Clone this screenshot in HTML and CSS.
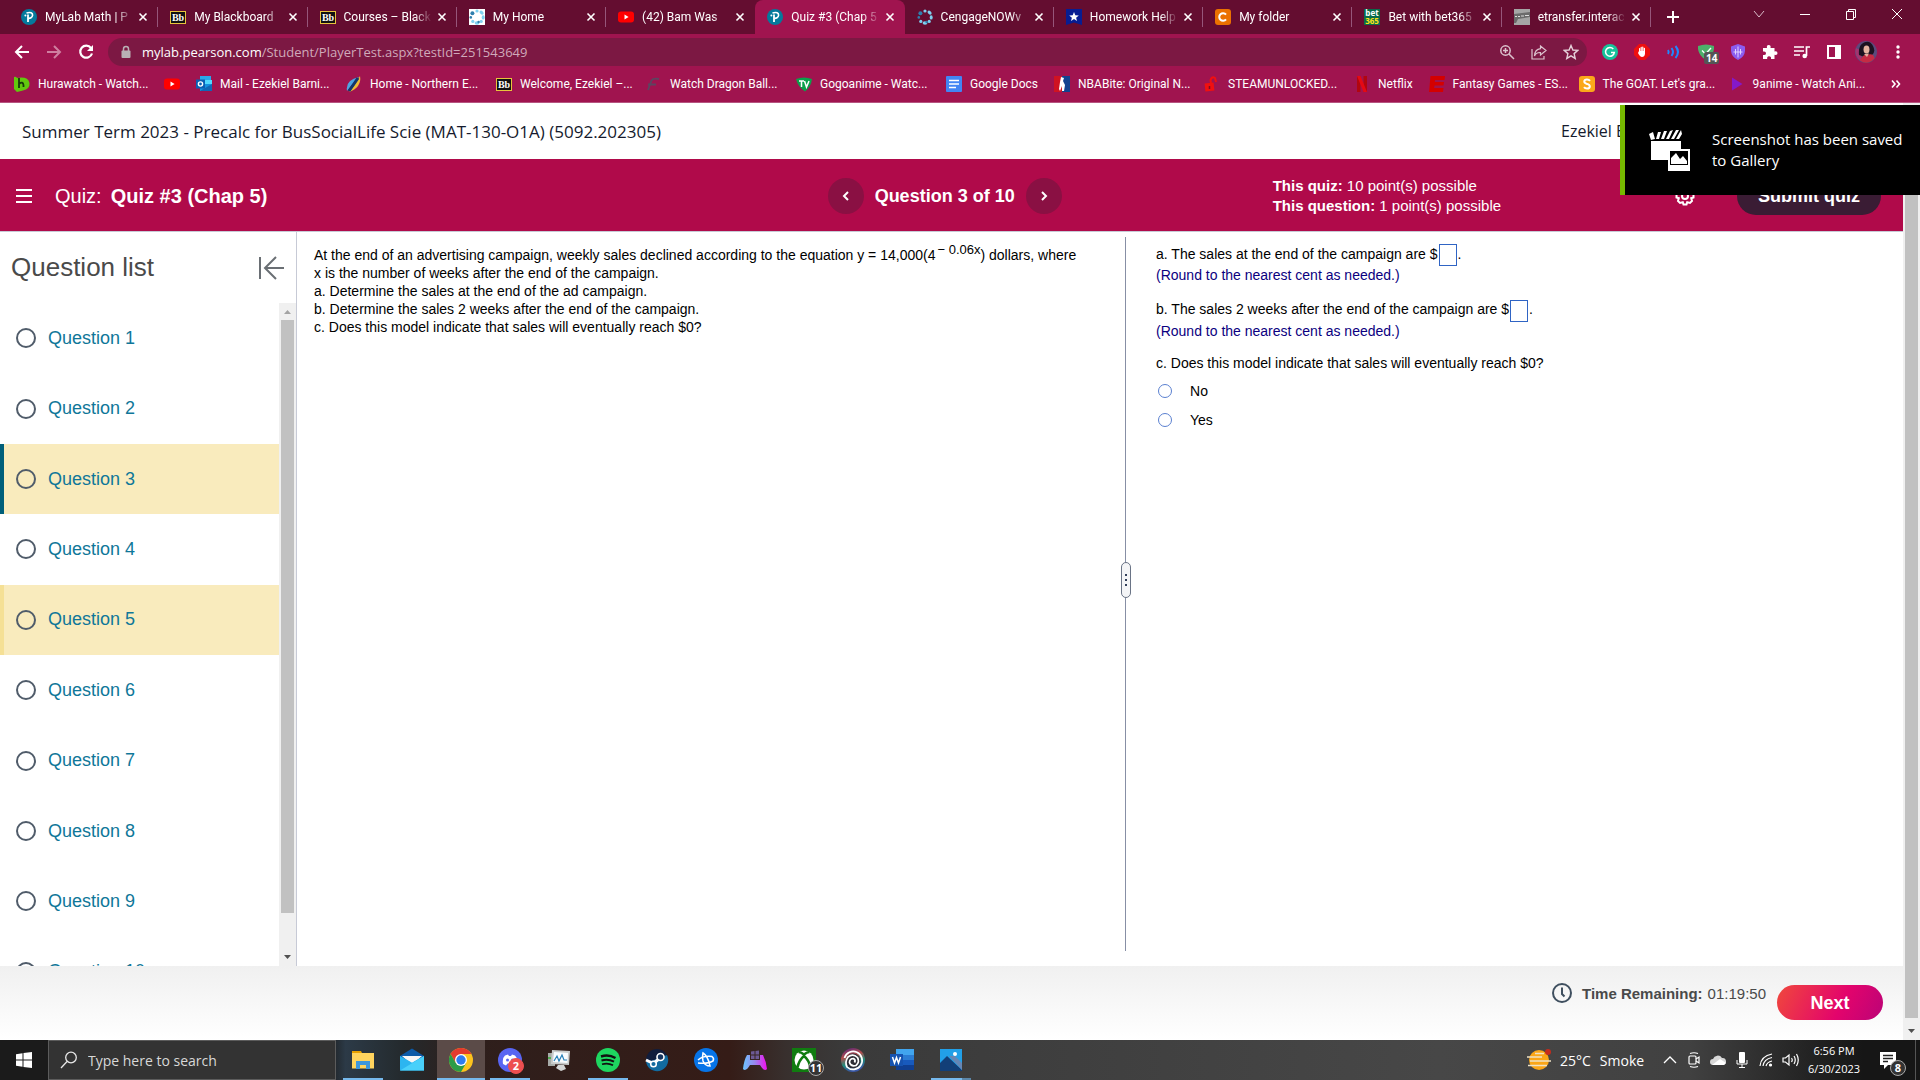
FILE: index.html
```html
<!DOCTYPE html>
<html lang="en">
<head>
    <meta charset="UTF-8">
    <meta name="viewport" content="width=device-width, initial-scale=1.0">
    <title>Quiz #3 (Chap 5)</title>
    <link rel="stylesheet" href="styles.css">
</head>
<body>
    <!-- shared favicons -->
    <svg class="symbols" aria-hidden="true">
        <symbol id="pearson" viewBox="0 0 16 16">
            <circle cx="8" cy="8" r="8" fill="#047a9c"/>
            <path d="M5.5 4 C9.5 2.6 11.8 4 11.6 6.3 C11.4 8.6 9 9.6 7.2 9.3" fill="none" stroke="#fff" stroke-width="1.6"/>
            <path d="M7 5.5 V13" stroke="#fff" stroke-width="1.8"/>
            <circle cx="4.4" cy="6.4" r="1" fill="#fff"/>
        </symbol>
        <symbol id="bb" viewBox="0 0 16 16">
            <rect x="0.5" y="2.5" width="15" height="12" fill="#111" stroke="#e8c43c"/>
            <text x="8" y="12" text-anchor="middle" font-family="Liberation Serif, serif" font-size="10" font-weight="bold" fill="#fff">Bb</text>
        </symbol>
        <symbol id="youtube" viewBox="0 0 16 16">
            <rect x="0" y="2.5" width="16" height="11" rx="3" fill="#f00"/>
            <path d="M6.5 5.6 L10.6 8 L6.5 10.4 Z" fill="#fff"/>
        </symbol>
        <symbol id="ring" viewBox="0 0 16 16">
            <g fill="#7fd0ef">
                <circle cx="8" cy="2" r="1.6"/>
                <ellipse cx="12.6" cy="3.6" rx="2.4" ry="1.6" transform="rotate(45 12.6 3.6)"/>
                <ellipse cx="14.2" cy="8.4" rx="1.5" ry="2.2"/>
                <circle cx="12.2" cy="12.4" r="1.6"/>
                <ellipse cx="8" cy="14" rx="2.4" ry="1.7"/>
                <circle cx="3.8" cy="12.4" r="1.6"/>
            </g>
            <g fill="#2f7fae">
                <circle cx="1.8" cy="8.4" r="1.3"/>
                <circle cx="3.4" cy="4.2" r="2"/>
                <circle cx="9.6" cy="13" r="1.2"/>
            </g>
        </symbol>
        <symbol id="x" viewBox="0 0 16 16">
            <path d="M4.5 4.5 L11.5 11.5 M11.5 4.5 L4.5 11.5" stroke="#fff" stroke-width="1.6"/>
        </symbol>
    </svg>

    <div class="tab-strip">
        <div class="tabs">
            <div class="tab">
                <svg class="favicon"><use href="#pearson"/></svg>
                <span class="tab-title">MyLab Math | P</span>
                <button class="tab-close" aria-label="Close tab"><svg><use href="#x"/></svg></button>
            </div>
            <div class="tab">
                <svg class="favicon"><use href="#bb"/></svg>
                <span class="tab-title">My Blackboard</span>
                <button class="tab-close" aria-label="Close tab"><svg><use href="#x"/></svg></button>
            </div>
            <div class="tab">
                <svg class="favicon"><use href="#bb"/></svg>
                <span class="tab-title">Courses – Black</span>
                <button class="tab-close" aria-label="Close tab"><svg><use href="#x"/></svg></button>
            </div>
            <div class="tab">
                <svg class="favicon light"><use href="#ring"/></svg>
                <span class="tab-title">My Home</span>
                <button class="tab-close" aria-label="Close tab"><svg><use href="#x"/></svg></button>
            </div>
            <div class="tab before-active">
                <svg class="favicon"><use href="#youtube"/></svg>
                <span class="tab-title">(42) Bam Was</span>
                <button class="tab-close" aria-label="Close tab"><svg><use href="#x"/></svg></button>
            </div>
            <div class="tab active">
                <svg class="favicon"><use href="#pearson"/></svg>
                <span class="tab-title">Quiz #3 (Chap 5</span>
                <button class="tab-close" aria-label="Close tab"><svg><use href="#x"/></svg></button>
            </div>
            <div class="tab">
                <svg class="favicon"><use href="#ring"/></svg>
                <span class="tab-title">CengageNOWv</span>
                <button class="tab-close" aria-label="Close tab"><svg><use href="#x"/></svg></button>
            </div>
            <div class="tab">
                <svg class="favicon" viewBox="0 0 16 16"><path d="M0 0 H16 V16 L8 13.5 L0 16 Z" fill="#071d92"/><path d="M8 3 L9.3 6.3 L12.8 6.5 L10.1 8.7 L11 12 L8 10.1 L5 12 L5.9 8.7 L3.2 6.5 L6.7 6.3 Z" fill="#fff"/></svg>
                <span class="tab-title">Homework Help</span>
                <button class="tab-close" aria-label="Close tab"><svg><use href="#x"/></svg></button>
            </div>
            <div class="tab">
                <svg class="favicon" viewBox="0 0 16 16"><rect width="16" height="16" rx="3" fill="#eb7100"/><path d="M11 5.6 A3.8 3.8 0 1 0 11 10.4" fill="none" stroke="#fff" stroke-width="2"/></svg>
                <span class="tab-title">My folder</span>
                <button class="tab-close" aria-label="Close tab"><svg><use href="#x"/></svg></button>
            </div>
            <div class="tab">
                <svg class="favicon" viewBox="0 0 16 16"><rect width="16" height="16" fill="#0a6b4b"/><text x="8" y="7" text-anchor="middle" font-family="Open Sans, sans-serif" font-size="8" font-weight="bold" fill="#fff">bet</text><text x="8" y="14.5" text-anchor="middle" font-family="Open Sans, sans-serif" font-size="8" font-weight="bold" fill="#ffe418">365</text></svg>
                <span class="tab-title">Bet with bet365</span>
                <button class="tab-close" aria-label="Close tab"><svg><use href="#x"/></svg></button>
            </div>
            <div class="tab">
                <svg class="favicon" viewBox="0 0 16 16"><rect width="16" height="16" fill="#a5a5a5"/><path d="M0 5 L16 3 V8 L4 10 L2 14 H0 Z" fill="#6b6b6b"/><path d="M1 7.500 H3 M4 7.500 H6 M7 7 H10 M11 6.500 H15" stroke="#ddd"/></svg>
                <span class="tab-title">etransfer.interac</span>
                <button class="tab-close" aria-label="Close tab"><svg><use href="#x"/></svg></button>
            </div>
        </div>
        <div class="window-area">
            <button class="new-tab" aria-label="New tab"><svg width="16" height="16"><path d="M8 2 V14 M2 8 H14" stroke="#fff" stroke-width="2"/></svg></button>
            <div class="window-buttons">
                <button aria-label="Search tabs"><svg width="12" height="12"><path d="M1 3 L6 9 L11 3" fill="none" stroke="#d8bcc8"/></svg></button>
                <button aria-label="Minimize"><svg width="12" height="12"><path d="M1 6.5 H11" stroke="#fff"/></svg></button>
                <button aria-label="Restore"><svg width="12" height="12"><path d="M1.5 3.5 H8.5 V11.5 H1.5 Z M3.5 3.5 V1.5 H10.5 V9.5 H8.5" fill="none" stroke="#fff"/></svg></button>
                <button aria-label="Close"><svg width="12" height="12"><path d="M1 1 L11 11 M11 1 L1 11" stroke="#fff"/></svg></button>
            </div>
        </div>
    </div>

    <div class="toolbar">
        <button aria-label="Back"><svg width="18" height="18"><path d="M16 9 H3 M9 3 L3 9 L9 15" fill="none" stroke="#fff" stroke-width="2"/></svg></button>
        <button aria-label="Forward"><svg width="18" height="18"><path d="M2 9 H15 M9 3 L15 9 L9 15" fill="none" stroke="#cf7fa0" stroke-width="2"/></svg></button>
        <button aria-label="Reload"><svg width="18" height="18"><path d="M14 5 A6 6 0 1 0 15 10.5" fill="none" stroke="#fff" stroke-width="2.2"/><path d="M16 2 V8 H10 Z" fill="#fff"/></svg></button>
        <div class="omnibox">
            <svg class="lock" width="12" height="14"><rect x="1.5" y="5.5" width="9" height="7.5" rx="1" fill="#b9b1b5"/><path d="M3.5 6 V4 A2.5 2.5 0 0 1 8.5 4 V6" fill="none" stroke="#b9b1b5" stroke-width="1.5"/></svg>
            <span class="url"><b>mylab.pearson.com</b>/Student/PlayerTest.aspx?testId=251543649</span>
            <button aria-label="Zoom"><svg width="16" height="16" fill="none" stroke="#dcc3ce" stroke-width="1.5"><circle cx="6.5" cy="6.5" r="4.7"/><path d="M10 10 L15 15 M4 6.5 H9 M6.5 4 V9"/></svg></button>
            <button aria-label="Share"><svg width="18" height="16" fill="none" stroke="#dcc3ce" stroke-width="1.2"><path d="M2 5 V15 H14 V12"/><path d="M10.5 2 L16 6.5 L10.5 11 V8.5 C7.5 8.3 5.6 9.4 4.5 12 C4.7 7.5 6.6 5 10.5 4.6 Z"/></svg></button>
            <button aria-label="Bookmark"><svg width="16" height="16"><path d="M8 1.5 L9.9 6 L14.8 6.4 L11.1 9.6 L12.2 14.4 L8 11.8 L3.8 14.4 L4.9 9.6 L1.2 6.4 L6.1 6 Z" fill="none" stroke="#e5d0d9" stroke-width="1.4"/></svg></button>
        </div>
        <button aria-label="Grammarly"><svg width="16" height="16"><circle cx="8" cy="8" r="8" fill="#15c39a"/><path d="M11.3 5 A4.4 4.4 0 1 0 12.3 8.6 H9" fill="none" stroke="#fff" stroke-width="1.5"/></svg></button>
        <button aria-label="AdBlock"><svg width="16" height="16"><path d="M5 0 H11 L16 5 V11 L11 16 H5 L0 11 V5 Z" fill="#ee0f0f"/><path d="M5.6 4.5 V8 M7.2 3.4 V8 M8.8 3.2 V8 M10.4 4.3 V9" stroke="#fff" stroke-width="1.2" stroke-linecap="round"/><path d="M5 7 H11 V10 Q10.5 13 8 13 Q6 13 4 9 Z" fill="#fff"/></svg></button>
        <button aria-label="Read aloud"><svg width="16" height="16" fill="none" stroke="#1e88ff" stroke-width="2"><path d="M2 6 Q3.4 8 2 10"/><path d="M5.5 4 Q8.5 8 5.5 12"/><path d="M9.5 2 Q14.5 8 9.5 14"/></svg></button>
        <button class="guard" aria-label="AdGuard"><svg width="16" height="16"><path d="M0 2 Q8 -1 16 2 V5 Q15 12 8 16 Q1 12 0 5 Z" fill="#4caf6a"/><path d="M4 6.5 L7.5 10 L13 4" fill="none" stroke="#fff" stroke-width="1.3"/></svg><span class="guard-count">14</span></button>
        <button aria-label="Privacy shield"><svg width="16" height="16"><path d="M8 0 L15 2.5 V7 Q14.5 13 8 16 Q1.500 13 1 7 V2.500 Z" fill="#8b5cf0"/><path d="M8 2.500 V13.500 M5.500 5 V10.500 M10.500 5 V10.500 M3.500 8 H12.500" stroke="#e1d2ff" stroke-width="1"/></svg></button>
        <button aria-label="Extensions"><svg width="16" height="16"><path d="M1 4 H5 Q4.300 1 6.700 1 Q9.200 1 8.500 4 H12.500 V7.500 Q15.500 6.800 15.500 9.200 Q15.500 11.500 12.500 10.800 V15 H9 Q9.500 12.300 7 12.300 Q4.800 12.300 5.200 15 H1 V11 Q4 11.500 4 9.200 Q4 7 1 7.600 Z" fill="#fff"/></svg></button>
        <button aria-label="Media"><svg width="18" height="16"><path d="M1 3 H11 M1 7 H11 M1 11 H7" stroke="#fff" stroke-width="1.700"/><path d="M13.500 12 V3 H17" fill="none" stroke="#fff" stroke-width="1.700"/><circle cx="11.700" cy="12" r="2.300" fill="#fff"/></svg></button>
        <button aria-label="Side panel"><svg width="14" height="14"><rect x="1" y="1" width="12" height="12" fill="none" stroke="#fff" stroke-width="2"/><rect x="8" y="1" width="5" height="12" fill="#fff"/></svg></button>
        <button aria-label="Profile"><svg width="22" height="22"><circle cx="11" cy="11" r="11" fill="#5a4a7c"/><path d="M1 7 A11 11 0 0 0 6 20 L7 10 Z" fill="#a3346f"/><path d="M4 14 Q3 4 9 1.500 Q15 -1 18 5 Q21 11 17 14 L12 17 Z" fill="#1c1220"/><ellipse cx="11.500" cy="8.500" rx="3" ry="4" fill="#e6b3a0"/><path d="M5 19.500 Q8 12.500 13 13.500 Q19 12 19.500 17.500 Q12 25 5 19.500 Z" fill="#c62b44"/><path d="M9 13 L12 16 L14 12.500 Z" fill="#e6b3a0"/></svg></button>
        <button aria-label="Menu"><svg width="4" height="16" fill="#fff"><circle cx="2" cy="3" r="1.700"/><circle cx="2" cy="8" r="1.700"/><circle cx="2" cy="13" r="1.700"/></svg></button>
    </div>

    <nav class="bookmarks">
        <a href="#"><svg class="favicon" viewBox="0 0 16 16"><path d="M0 1 Q2 0 3 2 Q14 0 15.500 7 Q16 13 9 14.500 L3 16 L0 13 Z" fill="#62c80e"/><path d="M5 2 V12 M5 8 Q9 5 9.500 9 V11" fill="none" stroke="#173c0a" stroke-width="1.800"/></svg><span class="clip">Hurawatch - Watch...</span></a>
        <a href="#" aria-label="YouTube"><svg class="favicon"><use href="#youtube"/></svg></a>
        <a href="#"><svg class="favicon" viewBox="0 0 16 16"><rect x="4" y="0" width="11" height="9" fill="#28a8ea"/><rect x="9" y="4" width="7" height="5" fill="#50d9ff"/><path d="M4 8 L16 8 V15 H4 Z" fill="#1490df"/><path d="M4 15 L16 8 V15 Z" fill="#1066b5"/><rect y="3.500" width="9" height="9" fill="#0a5fb4"/><circle cx="4.500" cy="8" r="2.100" fill="none" stroke="#fff" stroke-width="1.400"/></svg><span class="clip">Mail - Ezekiel Barni...</span></a>
        <a href="#"><svg class="favicon" viewBox="0 0 16 16"><path d="M1 15 Q-1 4 13 1 Q7 7 1 15 Z" fill="#4ea5e0"/><path d="M14 0 Q16 11 3 16 Q9 9 14 0 Z" fill="#eebd35"/><path d="M12 2 Q8 8 3 15" fill="none" stroke="#12376c" stroke-width="3"/></svg><span class="clip">Home - Northern E...</span></a>
        <a href="#"><svg class="favicon"><use href="#bb"/></svg><span class="clip">Welcome, Ezekiel –...</span></a>
        <a href="#"><svg class="favicon" viewBox="0 0 16 16"><path d="M13 3 Q7 2 5.500 4.500 L2 14 M2 8.500 H10" fill="none" stroke="#5c4560" stroke-width="1.800"/></svg><span class="clip">Watch Dragon Ball...</span></a>
        <a href="#"><svg class="favicon" viewBox="0 0 16 16"><path d="M0 3 Q8 0 16 3 Q15 11 9 15.500 Q2 11 0 3 Z" fill="#0ba14b"/><path d="M3 5 H8 M5.500 5 V11 M8.500 5 L10.500 11 L13 5" fill="none" stroke="#fff" stroke-width="1.500"/></svg><span class="clip">Gogoanime - Watc...</span></a>
        <a href="#"><svg class="favicon" viewBox="0 0 16 16"><rect width="16" height="16" rx="1" fill="#4285f4"/><path d="M3 4.500 H13 M3 8 H13 M3 11.500 H10" stroke="#fff" stroke-width="1.700"/></svg><span>Google Docs</span></a>
        <a href="#"><svg class="favicon" viewBox="0 0 16 16"><rect width="8" height="16" fill="#d01322"/><rect x="8" width="8" height="16" fill="#12428f"/><path d="M7 1 L10 2 L9 5 L11 9 L10 15 H8 L8 10 L6 15 L5 13 L6 6 Z" fill="#fff"/></svg><span class="clip">NBABite: Original N...</span></a>
        <a href="#"><svg class="favicon" viewBox="0 0 16 16"><rect x="1" y="7" width="9" height="8" fill="#f01010" transform="rotate(-6 5 11)"/><path d="M7 7 L6.500 4 Q8 0 11 2 L12 6" fill="none" stroke="#f01010" stroke-width="2"/><path d="M5.500 10 V13" stroke="#7c0b22" stroke-width="1.500"/></svg><span class="clip">STEAMUNLOCKED...</span></a>
        <a href="#"><svg class="favicon" viewBox="0 0 16 16"><path d="M3 0 H6.500 V16 H3 Z M9.500 0 H13 V16 H9.500 Z" fill="#b1060f"/><path d="M3 0 H6.500 L13 16 H9.500 Z" fill="#e50914"/></svg><span>Netflix</span></a>
        <a href="#"><svg class="favicon" viewBox="0 0 16 16"><path d="M1.500 0 H16 L15.500 4 H6 L5.800 6 H15 L14.500 9.500 H5.500 L5.200 12 H14.500 L14 16 H0 Z" fill="#d40000"/></svg><span class="clip">Fantasy Games - ES...</span></a>
        <a href="#"><svg class="favicon" viewBox="0 0 16 16"><rect width="16" height="16" rx="3" fill="#fba81a"/><path d="M11 4.800 Q10 3.500 8 3.500 Q5.300 3.500 5.300 5.600 Q5.300 7.300 8 7.900 Q10.800 8.600 10.800 10.400 Q10.800 12.500 8 12.500 Q6 12.500 5 11.100" fill="none" stroke="#fff" stroke-width="2"/></svg><span class="clip">The GOAT. Let's gra...</span></a>
        <a href="#"><svg class="favicon" viewBox="0 0 16 16"><path d="M3 1.500 L13.500 8 L3 14.500 Z" fill="#8419c8"/></svg><span class="clip">9anime - Watch Ani...</span></a>
        <button class="more-bookmarks" aria-label="More bookmarks"><svg width="12" height="12"><path d="M2 2.500 L5 6 L2 9.500 M6.500 2.500 L9.500 6 L6.500 9.500" fill="none" stroke="#fff" stroke-width="1.600"/></svg></button>
    </nav>

    <div class="viewport">
        <div class="page">
            <div class="course-bar">
                <span class="course-name">Summer Term 2023 - Precalc for BusSocialLife Scie (MAT-130-O1A) (5092.202305)</span>
                <span class="user-name">Ezekiel B</span>
            </div>

            <header class="quiz-bar">
                <div class="quiz-title">
                    <button class="menu" aria-label="Menu"><svg width="16" height="14"><path d="M0 1 H16 M0 7 H16 M0 13 H16" stroke="#fff" stroke-width="2"/></svg></button>
                    <span>Quiz:</span>
                    <strong>Quiz #3 (Chap 5)</strong>
                </div>
                <div class="question-nav">
                    <button aria-label="Previous question"><svg width="8" height="10"><path d="M6 1 L2 5 L6 9" fill="none" stroke="#fff" stroke-width="2"/></svg></button>
                    <strong>Question 3 of 10</strong>
                    <button aria-label="Next question"><svg width="8" height="10"><path d="M2 1 L6 5 L2 9" fill="none" stroke="#fff" stroke-width="2"/></svg></button>
                </div>
                <div class="points">
                    <div><strong>This quiz:</strong> 10 point(s) possible</div>
                    <div><strong>This question:</strong> 1 point(s) possible</div>
                </div>
                <button class="settings" aria-label="Settings"><svg width="20" height="20" viewBox="0 0 20 20" fill="none" stroke="#fff" stroke-width="2"><path d="M8.500 1.500 H11.500 L12.200 3.800 L15 3 L17 5 L16.200 7.800 L18.500 8.500 V11.500 L16.200 12.200 L17 15 L15 17 L12.200 16.200 L11.500 18.500 H8.500 L7.800 16.200 L5 17 L3 15 L3.800 12.200 L1.500 11.500 V8.500 L3.800 7.800 L3 5 L5 3 L7.800 3.800 Z"/><circle cx="10" cy="10" r="3"/></svg></button>
                <button class="submit">Submit quiz</button>
            </header>

            <div class="content">
                <aside class="sidebar">
                    <div class="sidebar-head">
                        <h2>Question list</h2>
                        <button aria-label="Collapse question list"><svg width="25" height="24"><path d="M1 1 V23 M25 12 H6 M17 1 L6 12 L17 23" fill="none" stroke="#6a6f74" stroke-width="2"/></svg></button>
                    </div>
                    <div class="list-wrap">
                        <div class="question-list">
                            <a href="#">Question 1</a>
                            <a href="#">Question 2</a>
                            <a href="#" class="current">Question 3</a>
                            <a href="#">Question 4</a>
                            <a href="#" class="hover">Question 5</a>
                            <a href="#">Question 6</a>
                            <a href="#">Question 7</a>
                            <a href="#">Question 8</a>
                            <a href="#">Question 9</a>
                            <a href="#">Question 10</a>
                        </div>
                        <div class="scrollbar list-scroll">
                            <svg width="17" height="17"><path d="M5 11 L8.500 7 L12 11 Z" fill="#a3a3a3"/></svg>
                            <div class="thumb"></div>
                            <svg width="17" height="17"><path d="M5 6 L8.500 10 L12 6 Z" fill="#505050"/></svg>
                        </div>
                    </div>
                </aside>

                <section class="question">
                    <p>At the end of an advertising campaign, weekly sales declined according to the equation y = 14,000(4<sup>− 0.06x</sup>) dollars, where<br>x is the number of weeks after the end of the campaign.</p>
                    <p>a. Determine the sales at the end of the ad campaign.</p>
                    <p>b. Determine the sales 2 weeks after the end of the campaign.</p>
                    <p>c. Does this model indicate that sales will eventually reach $0?</p>
                </section>

                <div class="divider"><span class="handle"><i></i><i></i><i></i></span></div>

                <form class="answers">
                    <div class="part">
                        <label for="sales-end">a. The sales at the end of the campaign are $</label><input type="text" id="sales-end">.
                        <p class="hint">(Round to the nearest cent as needed.)</p>
                    </div>
                    <div class="part">
                        <label for="sales-two">b. The sales 2 weeks after the end of the campaign are $</label><input type="text" id="sales-two">.
                        <p class="hint">(Round to the nearest cent as needed.)</p>
                    </div>
                    <p class="prompt">c. Does this model indicate that sales will eventually reach $0?</p>
                    <label class="choice"><input type="radio" name="reach"> No</label>
                    <label class="choice"><input type="radio" name="reach"> Yes</label>
                </form>
            </div>

            <footer class="quiz-footer">
                <svg class="clock" width="20" height="20" fill="none" stroke="#3f4f5f" stroke-width="2"><circle cx="10" cy="10" r="9"/><path d="M10 4.500 V11 L12.500 13.500"/></svg>
                <strong>Time Remaining:</strong>
                <span>01:19:50</span>
                <button class="next">Next</button>
            </footer>
        </div>
        <div class="scrollbar page-scroll">
            <svg width="17" height="17"><path d="M5 11 L8.500 7 L12 11 Z" fill="#505050"/></svg>
            <div class="thumb"></div>
            <svg width="17" height="17"><path d="M5 6 L8.500 10 L12 6 Z" fill="#505050"/></svg>
        </div>
    </div>

    <div class="taskbar">
        <button class="start" aria-label="Start"><svg width="16" height="16" fill="#fff"><path d="M0 2.300 L6.500 1.300 V7.500 H0 Z M7.500 1.100 L16 0 V7.500 H7.500 Z M0 8.500 H6.500 V14.700 L0 13.700 Z M7.500 8.500 H16 V16 L7.500 14.900 Z"/></svg></button>
        <label class="search">
            <svg width="18" height="18" fill="none" stroke="#e8e8e8" stroke-width="1.300"><circle cx="11" cy="6.500" r="5.300"/><path d="M7 10.500 L1 17"/></svg>
            <input type="text" placeholder="Type here to search" aria-label="Search">
        </label>
        <div class="apps">
            <button class="running" aria-label="File Explorer"><svg width="24" height="24"><path d="M1 3 H10 L11 5 V9 H1 Z" fill="#e8a100"/><rect x="1" y="5" width="22" height="15.500" fill="#ffd45e"/><path d="M5 21 V13 H19 V21 H15 V17 H9 V21 Z" fill="#3c97dd"/></svg></button>
            <button aria-label="Mail"><svg width="24" height="24"><path d="M0 8 L12 0.500 L24 8 V12 H0 Z" fill="#0c5aa8"/><path d="M2 8 H22 L13 16 H11 Z" fill="#f4f4f4"/><path d="M0 8 L12 14.500 L24 8 V22.500 H0 Z" fill="#2cb5f0"/><path d="M2.500 8 H21.500 L12 14.500 Z" fill="#f6f6f6"/><path d="M0 22.500 L24 8 V22.500 Z" fill="#49d0fa"/></svg></button>
            <button class="open" aria-label="Chrome"><svg width="24" height="24"><circle cx="12" cy="12" r="12" fill="#fcc31e"/><path d="M1.600 6 A12 12 0 0 1 22.400 6 L12 6 L6.800 15 Z" fill="#e33b2e"/><path d="M1.600 6 A12 12 0 0 0 12 24 L17.200 15 L6.800 15 Z" fill="#2d9c48"/><circle cx="12" cy="12" r="6" fill="#fff"/><circle cx="12" cy="12" r="4.700" fill="#2f7cf0"/></svg></button>
            <button class="running" aria-label="Discord"><svg width="24" height="24"><circle cx="12" cy="12" r="12" fill="#5865f2"/><path d="M5 16 Q4 10 7 7.500 L10 6.500 L11 8 H13 L14 6.500 L17 7.500 Q20 10 19 16 L16 17.500 L14.500 15.500 H9.500 L8 17.500 Z" fill="#fff"/><circle cx="9.500" cy="12" r="1.500" fill="#5865f2"/><circle cx="14.500" cy="12" r="1.500" fill="#5865f2"/></svg><span class="badge red">2</span></button>
            <button aria-label="Task Manager"><svg width="24" height="24"><rect x="1" y="5" width="7" height="13" fill="#a6aba8"/><rect x="1" y="9" width="3" height="2" fill="#4fae50"/><path d="M5 2 L23 3 L22 17 L4 16 Z" fill="#c9cccc"/><path d="M7 4 L21 5 L20.500 15 L6 14 Z" fill="#f8fcff"/><path d="M7 13 L10 8 L12 13 L15 7 L17 12 L20 12" fill="none" stroke="#2780b8" stroke-width="1.200"/><path d="M11 17 H17 L19 21 L14 23 L9 20 Z" fill="#d4d6d6"/></svg></button>
            <button class="running" aria-label="Spotify"><svg width="24" height="24"><circle cx="12" cy="12" r="12" fill="#1ed760"/><path d="M5 8.500 Q12.500 6 19.500 10" fill="none" stroke="#111" stroke-width="2.400"/><path d="M5.500 12.500 Q12 10.500 18 13.700" fill="none" stroke="#111" stroke-width="2"/><path d="M6 16.200 Q12 14.500 17 17.200" fill="none" stroke="#111" stroke-width="1.700"/></svg></button>
            <button aria-label="Steam"><svg width="24" height="24"><circle cx="12" cy="12" r="11" fill="#111d3c"/><path d="M1 14 Q12 12 22 7 A11 11 0 0 1 2 17 Z" fill="#126b9f"/><path d="M1 12 L8.500 15.500 L15.500 9.500" fill="none" stroke="#fff" stroke-width="3"/><circle cx="8.500" cy="16" r="2.800" fill="#126b9f" stroke="#fff" stroke-width="1.500"/><circle cx="15.500" cy="9" r="3.500" fill="#16345e" stroke="#fff" stroke-width="1.600"/></svg></button>
            <button aria-label="Battle.net"><svg width="24" height="24"><circle cx="12" cy="12" r="12" fill="#0674e8"/><g fill="none" stroke="#fff" stroke-width="1.500"><path d="M9 5 Q14 8 16 18 Q11 18 9 13 Q8 9 9 5 Z"/><path d="M4 12 Q9 7.500 18 8.500 Q20.500 10.500 19 13 Q14 16 4 15"/></g></svg></button>
            <button aria-label="Game controller"><svg width="24" height="24"><defs><linearGradient id="pad"><stop offset="0" stop-color="#6cc4ff"/><stop offset="0.500" stop-color="#9a86ee"/><stop offset="1" stop-color="#f30cf0"/></linearGradient></defs><path d="M4 7 H7 V12 H17 V7 H20 Q23 13 24 21 Q21 24 17 17 H7 Q3 24 0 21 Q1 12 4 7 Z" fill="url(#pad)"/><path d="M8 3.500 L11.500 3 V6.500 H8 Z M12.500 2.900 L16 2.500 V6.500 H12.500 Z M8 7.500 H11.500 V11 H8 Z M12.500 7.500 H16 V11 H12.500 Z" fill="#6c5a94"/></svg></button>
            <button aria-label="Xbox"><svg width="24" height="24"><rect width="24" height="24" fill="#107c10"/><circle cx="12" cy="12" r="9.500" fill="#fff"/><path d="M12 8 Q17 12 18.500 19.500 M12 8 Q7 12 5.500 19.500 M6.500 4 Q9 4 12 6.500 Q15 4 17.500 4" fill="none" stroke="#107c10" stroke-width="2.600"/></svg><span class="badge">11</span></button>
            <button aria-label="Ubisoft Connect"><svg width="24" height="24"><defs><linearGradient id="ubi" x2="0.300" y2="1"><stop offset="0" stop-color="#4c2380"/><stop offset="0.400" stop-color="#b24b4c"/><stop offset="0.700" stop-color="#218c7a"/><stop offset="1" stop-color="#3a58a6"/></linearGradient></defs><circle cx="12" cy="12" r="12" fill="url(#ubi)"/><circle cx="12" cy="13" r="7.500" fill="#2d2d35"/><path d="M3.500 10 A9 9 0 1 1 6 19 Q3.500 14 7 9 Q12 5 16.500 9.500 Q19 14 15 17.500 Q10 19 8.500 14.500 Q8.500 10.500 12.500 10.500 Q15 12 13.500 14.500" fill="none" stroke="#fff" stroke-width="1.700"/></svg></button>
            <button aria-label="Word"><svg width="24" height="24"><rect x="6" y="1" width="18" height="6" fill="#41a5ee"/><rect x="6" y="7" width="18" height="5" fill="#2b7cd3"/><rect x="6" y="12" width="18" height="5" fill="#185abd"/><rect x="6" y="17" width="18" height="5" fill="#103f91"/><rect y="6" width="13" height="12" fill="#1653b0"/><path d="M2.500 9 L4.500 15 L6.500 9.500 L8.500 15 L10.500 9" fill="none" stroke="#fff" stroke-width="1.500"/></svg></button>
            <button class="running stacked" aria-label="Photos"><svg width="24" height="24"><rect x="1" y="1" width="22" height="22" fill="#22a0e8"/><path d="M1 15 L8 8 L23 22 V23 H1 Z" fill="#123f78"/><path d="M10 8 H16 L23 15 V22 Z" fill="#6686b4"/><circle cx="16" cy="6" r="2" fill="#fff"/></svg></button>
        </div>
        <div class="tray">
            <div class="weather">
                <svg width="24" height="22"><circle cx="12" cy="11" r="10" fill="#fba617"/><path d="M0 8 H15 M3 12 H24 M1 16.500 H20 M8 4.500 H17" stroke="#f0e2c4" stroke-width="1.700"/><circle cx="21" cy="3" r="3" fill="#c42b1c"/></svg>
                <span>25°C</span><span>Smoke</span>
            </div>
            <button aria-label="Show hidden icons"><svg width="14" height="14"><path d="M1 10 L7 4 L13 10" fill="none" stroke="#fff" stroke-width="1.300"/></svg></button>
            <button aria-label="Meet now"><svg width="14" height="16" fill="none" stroke="#fff" stroke-width="1.200"><rect x="2" y="4" width="7" height="8" rx="1"/><path d="M9 7 L12 5 V11 L9 9 M3 1.500 Q7 0 11 1.500 M3 14.500 Q7 16 11 14.500"/></svg></button>
            <button aria-label="OneDrive"><svg width="16" height="12"><path d="M3 11 A3 3 0 0 1 3 5 A5 5 0 0 1 12 4 A3.500 3.500 0 0 1 13 11 Z" fill="#d8d8d8"/><path d="M2 11 L10 5 L16 9 L14 11 Z" fill="#fff"/></svg></button>
            <button aria-label="Microphone"><svg width="12" height="16"><rect x="3" y="0" width="6" height="11" rx="1" fill="#fff"/><path d="M1 8 V12 H11 V8 M6 12 V15 M3 15.500 H9" fill="none" stroke="#fff"/></svg></button>
            <button aria-label="Network"><svg width="14" height="14" fill="none" stroke="#fff" stroke-width="1.200"><path d="M1 13 Q2 3 13 1"/><path d="M4 13 Q5 6 13 4.500"/><path d="M7 13 Q8 9 13 8"/><circle cx="11.500" cy="12" r="1" fill="#fff"/></svg></button>
            <button aria-label="Volume"><svg width="17" height="14" fill="none" stroke="#fff" stroke-width="1.200"><path d="M1 5 H3.500 L7 2 V12 L3.500 9 H1 Z"/><path d="M9.500 5 Q11 7 9.500 9 M12 3 Q14.500 7 12 11 M14.500 1 Q18 7 14.500 13"/></svg></button>
            <div class="clock-text">6:56 PM<br>6/30/2023</div>
            <button class="notices" aria-label="Notifications"><svg width="18" height="18"><path d="M1 1 H17 V14 H9 L5 18 V14 H1 Z" fill="#fff"/><path d="M4 4.500 H14 M4 7.500 H14 M4 10.500 H9" stroke="#222" stroke-width="1.300"/></svg><span class="badge">8</span></button>
        </div>
    </div>

    <div class="toast" role="status">
        <svg width="42" height="42" viewBox="0 0 42 42"><path d="M2 12 H32 V20 H20 V31 H2 Z" fill="#fff"/><path d="M0 5 L4 3 L6 10 L2 11 Z M9 3 L12 3 L10 10 H7 Z M15 2 L18 2 L15 10 H12 Z M21 2 L24 1 L20 10 H17 Z M27 1 L30 1 L25 10 H22 Z M32 1 L33 5 L30 10 H27 Z" fill="#fff"/><rect x="19" y="20" width="22" height="22" fill="#fff"/><path d="M21 22 H39 V36 H21 Z" fill="#000"/><path d="M22 35 V29 L27 24 L31 30 L34 27 L38 32 V35 Z" fill="#fff"/></svg>
        <span>Screenshot has been saved to Gallery</span>
    </div>
</body>
</html>
```
FILE: styles.css
```css
*,
*::before {
    box-sizing: border-box;
}
body {
    font-family: "Liberation Sans", Arial, sans-serif;
    font-size: 14px;
    margin: 0;
    height: 100vh;
    display: flex;
    flex-direction: column;
    overflow: hidden;
    background: #fff;
}
button {
    background: none;
    border: none;
    padding: 0;
    margin: 0;
    color: inherit;
    font: inherit;
    display: flex;
    align-items: center;
    justify-content: center;
}
a {
    text-decoration: none;
}
p {
    margin: 0;
}
svg {
    flex: none;
}
.symbols {
    display: none;
}
.favicon {
    width: 16px;
    height: 16px;
}
.favicon.light {
    background: #fff;
}

/* browser tabs */
.tab-strip {
    display: flex;
    height: 34px;
    background: #640d30;
    color: #fff;
    font-family: Roboto, sans-serif;
    font-size: 12px;
}
.tabs {
    flex: 1;
    min-width: 0;
    display: flex;
    padding-left: 9px;
}
.tab {
    flex: 1;
    min-width: 0;
    position: relative;
    display: flex;
    align-items: center;
    padding: 0 7px 0 12px;
}
.tab::after {
    content: "";
    position: absolute;
    right: 0;
    top: 7px;
    width: 1px;
    height: 20px;
    background: #96567a;
}
.tab.active::after,
.tab.before-active::after {
    display: none;
}
.tab.active {
    background: #a0144f;
    border-radius: 8px 8px 0 0;
}
.tab-title {
    flex: 1;
    min-width: 0;
    margin: 0 2px 0 8px;
    overflow: hidden;
    white-space: nowrap;
    -webkit-mask-image: linear-gradient(90deg, #000 80%, transparent);
    mask-image: linear-gradient(90deg, #000 80%, transparent);
}
.tab-close svg {
    width: 16px;
    height: 16px;
}
.window-area {
    width: 269px;
    display: flex;
    justify-content: space-between;
}
.new-tab {
    width: 44px;
}
.window-buttons {
    display: flex;
    height: 28px;
}
.window-buttons button {
    width: 46px;
}

/* address bar */
.toolbar {
    display: flex;
    align-items: center;
    height: 36px;
    padding: 0 6px;
    background: #a0144f;
}
.toolbar button {
    width: 32px;
    height: 28px;
}
.omnibox {
    flex: 1;
    display: flex;
    align-items: center;
    height: 28px;
    margin: 0 7px 0 6px;
    padding-left: 12px;
    border-radius: 14px;
    background: #7c1843;
}
.url {
    flex: 1;
    margin-left: 10px;
    font-family: "Open Sans", sans-serif;
    font-size: 13px;
    color: #d0a9ba;
}
.url b {
    font-weight: normal;
    color: #fff;
}
.guard {
    position: relative;
}
.guard-count {
    position: absolute;
    left: 14px;
    top: 14px;
    padding: 0 2px;
    border-radius: 2px;
    background: #555;
    color: #fff;
    font: bold 10px/12px "Open Sans", sans-serif;
}

/* bookmarks */
.bookmarks {
    display: flex;
    align-items: center;
    gap: 16px;
    height: 33px;
    padding: 0 18px 4px 14px;
    background: #a0144f;
    border-bottom: 1px solid #b65580;
    font-family: Roboto, sans-serif;
    font-size: 12px;
}
.bookmarks a {
    display: flex;
    align-items: center;
    gap: 8px;
    color: #fff;
    white-space: nowrap;
}
.clip {
    width: 110px;
}
.more-bookmarks {
    margin-left: auto;
}

/* web page */
.viewport {
    flex: 1;
    min-height: 0;
    display: flex;
}
.page {
    flex: 1;
    min-width: 0;
    display: flex;
    flex-direction: column;
}
.course-bar {
    display: flex;
    justify-content: space-between;
    align-items: center;
    height: 56px;
    padding-left: 22px;
    font-family: "Open Sans", sans-serif;
    font-size: 17px;
    color: #151a2d;
}
.user-name {
    width: 342px;
    font-size: 16px;
}
.quiz-bar {
    display: flex;
    align-items: center;
    height: 73px;
    padding: 2px 22px 0 0;
    background: #b00a4a;
    border-bottom: 1px solid #c7cad6;
    color: #fff;
}
.quiz-title {
    width: 44%;
    display: flex;
    align-items: center;
    padding-left: 16px;
    font-size: 20px;
}
.quiz-title .menu {
    margin-right: 23px;
}
.quiz-title strong {
    margin-left: 9px;
}
.question-nav {
    display: flex;
    align-items: center;
    gap: 11px;
    font-size: 18px;
}
.question-nav button {
    width: 36px;
    height: 36px;
    border-radius: 50%;
    background: #8a1043;
}
.points {
    margin-left: 211px;
    font-size: 15px;
    line-height: 20px;
}
.settings {
    margin-left: auto;
}
.submit {
    width: 144px;
    height: 38px;
    margin-left: 42px;
    border-radius: 19px;
    background: #3a1c34;
    font-size: 18px;
    font-weight: bold;
}
.content {
    flex: 1;
    min-height: 0;
    display: flex;
}

/* question list */
.sidebar {
    width: 297px;
    display: flex;
    flex-direction: column;
    border-right: 1px solid #c7cad6;
}
.sidebar-head {
    display: flex;
    align-items: center;
    justify-content: space-between;
    height: 71px;
    padding: 0 12px 0 11px;
}
.sidebar-head h2 {
    margin: 0;
    font-size: 26px;
    font-weight: normal;
    color: #4a4a4a;
}
.list-wrap {
    flex: 1;
    min-height: 0;
    display: flex;
    overflow: hidden;
}
.question-list {
    flex: 1;
    height: 704px;
    display: flex;
    flex-direction: column;
}
.question-list a {
    flex: 1;
    display: flex;
    align-items: center;
    gap: 12px;
    padding-left: 12px;
    border-left: 4px solid transparent;
    font-size: 18px;
    color: #0f7799;
}
.question-list a::before {
    content: "";
    width: 20px;
    height: 20px;
    border: 2px solid #505c6a;
    border-radius: 50%;
}
.question-list a.current,
.question-list a.hover {
    background: #f9ebbd;
    border-left-color: #f5e095;
}
.question-list a.current {
    border-left-color: #005f7a;
}
.scrollbar {
    flex: none;
    width: 17px;
    display: flex;
    flex-direction: column;
    align-items: center;
    background: #f0f0f0;
}
.thumb {
    width: 13px;
    height: 593px;
    background: #c1c1c1;
}
.scrollbar svg:last-child {
    margin-top: auto;
}
.page-scroll .thumb {
    height: 898px;
}

/* question and answers */
.question {
    flex: 827;
    padding: 14px 17px 0;
    line-height: 18px;
}
.question sup {
    margin-left: 2px;
    font-size: 13px;
    line-height: 0;
    vertical-align: 6px;
}
.divider {
    position: relative;
    width: 1px;
    margin: 5px 0 15px;
    background: #878fa5;
}
.handle {
    position: absolute;
    left: 50%;
    top: 48%;
    transform: translate(-50%, -50%);
    width: 10px;
    height: 36px;
    display: flex;
    flex-direction: column;
    align-items: center;
    justify-content: center;
    gap: 3px;
    border: 1px solid #6a7486;
    border-radius: 5px;
    background: #f4f5f7;
}
.handle i {
    width: 2px;
    height: 2px;
    background: #33405a;
}
.answers {
    flex: 778;
    padding: 11px 0 0 30px;
    line-height: 18px;
}
.part {
    margin-bottom: 14px;
    line-height: 22px;
}
.part input {
    width: 18px;
    height: 22px;
    margin: 0 1px;
    padding: 0;
    border: 1px solid #2f64c4;
    vertical-align: middle;
}
.hint {
    line-height: 18px;
    color: #0b0080;
}
.prompt {
    margin-bottom: 5px;
}
.choice {
    display: flex;
    align-items: center;
    height: 29px;
}
.choice input {
    appearance: none;
    width: 14px;
    height: 14px;
    margin: 0 18px 0 2px;
    border: 1px solid #5a7fd0;
    border-radius: 50%;
}
.quiz-footer {
    display: flex;
    height: 74px;
    padding: 19px 20px 0 0;
    justify-content: flex-end;
    background: linear-gradient(#f0f0f0, #fff);
    font-size: 15px;
    line-height: 18px;
    color: #4a4a4a;
}
.quiz-footer .clock {
    margin: -2px 10px 0 0;
}
.quiz-footer span {
    margin: 0 11px 0 5px;
}
.next {
    width: 106px;
    height: 35px;
    border-radius: 18px;
    background: linear-gradient(115deg, #f0483c, #e3046c 60%, #bb0377);
    color: #fff;
    font-size: 18px;
    font-weight: bold;
}

/* taskbar */
.taskbar {
    display: flex;
    height: 40px;
    background: linear-gradient(90deg, #1b1b1b 0, #1b1b1b 17%, #2c3a47 18%, #242a2d 21%, #2e1f1c 24%, #351c17 38%, #38302e 41%, #3a3a3a 44%, #474747 75%, #414141 88%, #161616 97%);
    color: #fff;
    font-family: "Open Sans", sans-serif;
}
.start {
    width: 48px;
}
.search {
    width: 288px;
    display: flex;
    align-items: center;
    gap: 10px;
    padding-left: 11px;
    border: 1px solid #5c5c5c;
    background: #333;
}
.search input {
    width: 200px;
    padding: 0;
    border: none;
    background: none;
    font: 14px "Open Sans", sans-serif;
}
.search input::placeholder {
    color: #d8d8d8;
}
.apps {
    flex: 1;
    display: flex;
    gap: 1px;
    margin-left: 3px;
}
.apps button {
    position: relative;
    width: 48px;
}
.apps .open {
    background: #5b4b48;
    border-bottom: 2px solid #76b9ed;
    padding-top: 2px;
}
.apps .running::after {
    content: "";
    position: absolute;
    left: 4px;
    right: 4px;
    bottom: 0;
    height: 2px;
    background: #76b9ed;
}
.apps .stacked::after {
    background: linear-gradient(90deg, #76b9ed 78%, #5b86a8 78%);
}
.badge {
    position: absolute;
    right: 4px;
    bottom: 4px;
    width: 16px;
    height: 16px;
    border: 1px solid #aaa;
    border-radius: 50%;
    background: #333;
    color: #fff;
    font: bold 11px/14px "Open Sans", sans-serif;
    text-align: center;
}
.badge.red {
    right: 10px;
    bottom: 6px;
    border-color: #ed4f50;
    background: #ed4f50;
}
.tray {
    display: flex;
    align-items: center;
    padding-right: 5px;
    border-right: 1px solid #555;
    margin-right: 4px;
}
.tray button {
    width: 24px;
    height: 40px;
}
.weather {
    display: flex;
    align-items: center;
    gap: 9px;
    width: 131px;
    font-size: 14px;
}
.clock-text {
    width: 64px;
    text-align: center;
    font-size: 11px;
    line-height: 18px;
}
.tray .notices {
    position: relative;
    width: 44px;
}

/* screenshot notification */
.toast {
    position: fixed;
    top: 105px;
    right: 0;
    width: 300px;
    height: 90px;
    display: flex;
    align-items: center;
    gap: 21px;
    padding: 0 10px 0 24px;
    border-left: 5px solid #76b900;
    background: #000;
    color: #fff;
    font-family: "Open Sans", sans-serif;
    font-size: 15px;
    line-height: 21px;
}
```
